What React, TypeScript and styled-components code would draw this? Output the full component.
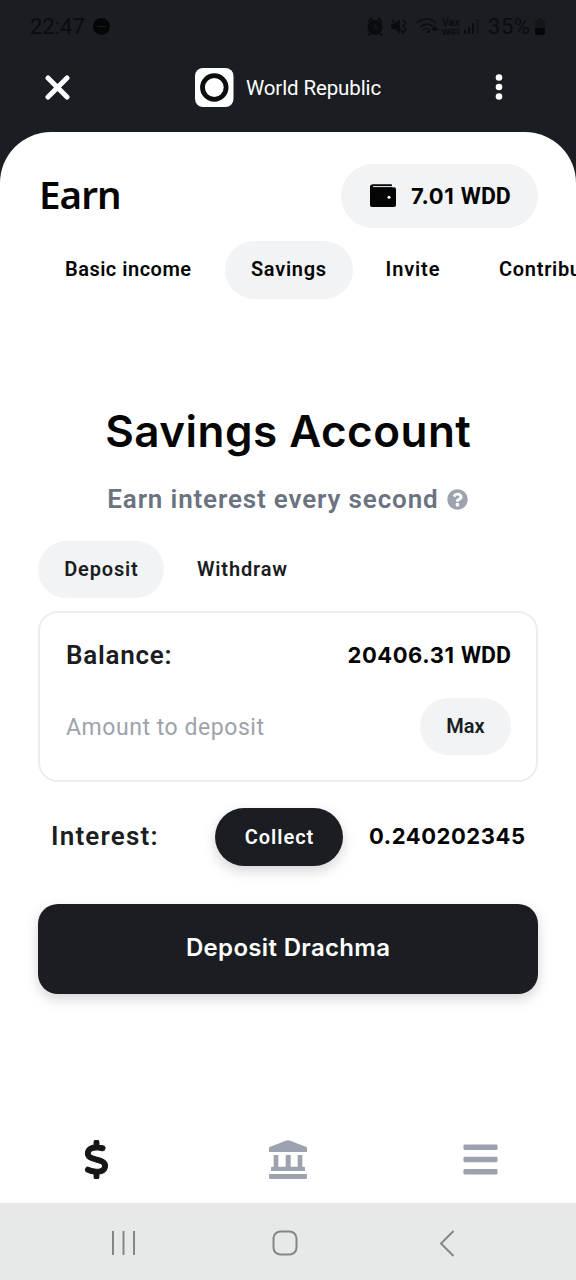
import React from 'react';
import styled, { createGlobalStyle } from 'styled-components';
import { FaBars, FaQuestionCircle } from 'react-icons/fa';
import { FaDollarSign } from 'react-icons/fa6';

const GlobalStyle = createGlobalStyle`
  *, *::before, *::after { box-sizing: border-box; }
  body { margin: 0; background: #1a1d21; font-family: Roboto, "Liberation Sans", sans-serif; }
  h1 { margin: 0; }
  button, input { font: inherit; border: 0; padding: 0; margin: 0; background: none; }
`;

const Screen = styled.div`
  width: 576px;
  height: 1280px;
  display: flex;
  flex-direction: column;
  overflow: hidden;
  background: #1a1d21;
`;

const StatusBar = styled.div`
  height: 54px;
  padding: 0 30px;
  display: flex;
  align-items: center;
  justify-content: space-between;
`;

const StatusGroup = styled.div<{ $gap: number }>`
  display: flex;
  align-items: center;
  gap: ${(p) => p.$gap}px;
`;

const AppBar = styled.header`
  height: 78px;
  padding: 0 66px 12px 45px;
  display: grid;
  grid-template-columns: 149.5px 1fr 15px;
  align-items: center;
  color: #fff;
`;

const Brand = styled.div`
  display: flex;
  align-items: center;
  gap: 12.5px;
`;

const BrandName = styled.span`
  padding-top: 2px;
  font-size: 20.5px;
  line-height: 1.2;
  letter-spacing: -0.12px;
`;

const Sheet = styled.main`
  height: 1071px;
  display: flex;
  flex-direction: column;
  border-radius: 51px 51px 0 0;
  background: #fff;
  overflow: hidden;
`;

const TitleRow = styled.div`
  display: flex;
  align-items: center;
  justify-content: space-between;
  padding: 32px 38px 0 39px;
`;

const Title = styled.h1`
  padding-bottom: 4px;
  font-family: "Noto Sans", sans-serif;
  font-size: 38.5px;
  font-weight: 600;
  line-height: 1.2;
  letter-spacing: -0.9px;
  color: #050505;
`;

const WalletPill = styled.div`
  width: 197px;
  height: 64px;
  border-radius: 32px;
  display: flex;
  align-items: center;
  gap: 15px;
  padding-left: 29px;
  background: #f2f3f5;
`;

const Tabs = styled.nav<{ $top: number; $gap?: number }>`
  display: flex;
  flex: none;
  gap: ${(p) => p.$gap ?? 0}px;
  margin: ${(p) => p.$top}px 0 0 38px;
`;

const Pill = styled.button<{ $active?: boolean; $width: number; $height?: number }>`
  flex: none;
  width: ${(p) => p.$width}px;
  height: ${(p) => p.$height ?? 57}px;
  border-radius: 29px;
  display: flex;
  align-items: center;
  justify-content: center;
  background: ${(p) => (p.$active ? '#f2f3f5' : 'transparent')};
`;

const TabPill = styled(Pill)`
  padding-bottom: 2px;
`;

const Text = styled.span<{
  $size: number;
  $weight?: number;
  $spacing?: number;
  $color?: string;
  $family?: string;
}>`
  font-family: ${(p) => p.$family ?? 'Roboto'}, "Liberation Sans", sans-serif;
  font-size: ${(p) => p.$size}px;
  font-weight: ${(p) => p.$weight ?? 600};
  letter-spacing: ${(p) => p.$spacing ?? 0}px;
  margin-right: ${(p) => -(p.$spacing ?? 0)}px;
  color: ${(p) => p.$color ?? '#050505'};
  line-height: 1.2;
  white-space: pre;
`;

const Money = styled.div`
  display: flex;
  align-items: baseline;
  gap: 6.5px;
  font-family: Inter, "Liberation Sans", sans-serif;
  font-size: 22px;
  font-weight: 700;
  line-height: 28px;
  letter-spacing: 0.55px;
  color: #050505;
`;

const Unit = styled.span`
  font-family: Roboto, "Liberation Sans", sans-serif;
  font-size: 23px;
  letter-spacing: 0;
`;

const Hero = styled.section`
  display: flex;
  flex-direction: column;
  align-items: center;
  padding-top: 106px;
`;

const Subtitle = styled.div`
  display: flex;
  align-items: center;
  gap: 9px;
  margin-top: 27px;
  height: 30px;
  padding-right: 1px;
`;

const Card = styled.section`
  flex: none;
  height: 171px;
  margin: 13px 38px 0;
  padding: 14px 25px 0 26px;
  border: 2px solid #ededee;
  border-radius: 20px;
`;

const CardRow = styled.div<{ $height: number }>`
  height: ${(p) => p.$height}px;
  display: flex;
  align-items: center;
  justify-content: space-between;
`;

const AmountInput = styled.input`
  width: 260px;
  height: 40px;
  padding-top: 2px;
  outline: none;
  font-size: 23px;
  letter-spacing: 0.55px;
  &::placeholder { color: #9ca3ab; opacity: 1; }
`;

const InterestRow = styled.div`
  display: grid;
  grid-template-columns: 164px 128px 1fr;
  align-items: center;
  margin: 26px 38px 0 51px;
`;

const CollectButton = styled.button`
  height: 58px;
  border-radius: 29px;
  background: #1a1d21;
  box-shadow: 0 5px 13px rgba(0, 0, 0, 0.17);
`;

const Amount = styled.div`
  padding: 0 0 2px 26px;
`;

const DepositButton = styled.button`
  flex: none;
  height: 90px;
  margin: 38px 38px 0;
  border-radius: 20px;
  background: #1a1d21;
  box-shadow: 0 5px 13px rgba(0, 0, 0, 0.17);
`;

const BottomNav = styled.nav`
  height: 88px;
  margin-top: auto;
  display: grid;
  grid-template-columns: repeat(3, 1fr);
  justify-items: center;
  align-items: center;
  color: #9ca3af;
`;

const SystemNav = styled.nav`
  height: 77px;
  flex: none;
  padding: 3px 121px 0 111px;
  display: grid;
  grid-template-columns: 161px 1fr 16px;
  align-items: center;
  background: #e7e9e8;
`;

const INK = '#0a0c0f';

const StatusIcons = () => (
  <svg width="114" height="22" viewBox="0 0 114 22" fill="none" stroke={INK} strokeWidth="2">
    <circle cx="8" cy="11.5" r="6.5" fill={INK} />
    <path d="M1 6l4-4M15 6l-4-4M3 18l-2 1M13 18l2 1" />
    <path d="M8 8v4h3" stroke="#1a1d21" strokeWidth="1.2" />
    <path d="M24 8h4l5-5v15l-5-5h-4z" fill={INK} stroke="none" />
    <path d="M25 4l12 14M36 4l3 3-3 3 3 3-3 4" strokeWidth="1.5" />
    <path d="M50 7q10-8 19 0M53 11q7-6 13 0M56 14q4-3 7 0" strokeWidth="1.2" />
    <path d="M60 16h3M68 10v5M65 13h6" strokeWidth="2" />
    <path d="M98 18v-4M102 18V11M106 18V7" strokeWidth="1.8" />
    <path d="M110.5 18V3" strokeWidth="1.8" opacity="0.5" />
    <g fill={INK} stroke="none" fontFamily="Liberation Sans, sans-serif" fontWeight="700">
      <text x="75" y="10" fontSize="10" textLength="18">Vax</text>
      <text x="75" y="19" fontSize="9" textLength="18" lengthAdjust="spacingAndGlyphs">WiFi</text>
    </g>
  </svg>
);

const BatteryIcon = () => (
  <svg width="12" height="18" viewBox="0 0 12 18">
    <path d="M4 0h4v2h3v8H1V2h3z" fill="#14171a" />
    <path d="M1 10h10v5a2 2 0 0 1-2 2H3a2 2 0 0 1-2-2z" fill="#050608" />
  </svg>
);

const WalletIcon = () => (
  <svg width="26" height="24" viewBox="0 0 26 24">
    <path d="M0 3Q0 .3 3 .3h18q1 0 1 1v2h2a2 2 0 0 1 2 2V21a2 2 0 0 1-2 2H2a2 2 0 0 1-2-2z" fill="#050505" />
    <path d="M3 2.6H24" stroke="#f2f3f5" strokeWidth="1" />
    <circle cx="19" cy="13.2" r="1.5" fill="#fff" />
  </svg>
);

const BankIcon = () => (
  <svg width="38" height="39" viewBox="0 0 114 117" fill="#9ca3af">
    <path d="M2 21L54 1q3-1 6 0l52 20q2 1 2 3v12H0V24q0-2 2-3z" />
    <path d="M14 45h14v35h22V45h15v35h21V45h14v35h5q3 0 3 3v10H6V83q0-3 3-3h5z" />
    <rect y="102" width="114" height="15" rx="3" />
  </svg>
);

export default function App() {
  return (
    <Screen>
      <GlobalStyle />
      <StatusBar>
        <StatusGroup $gap={8.5}>
          <Text $size={22} $weight={400} $color={INK}>22:47</Text>
          <svg width="17" height="17" viewBox="0 0 17 17">
            <circle cx="8.5" cy="8.5" r="8.5" fill="#050608" />
            <path d="M4 8.5h9" stroke="#1a1d21" strokeWidth="1.2" />
          </svg>
        </StatusGroup>
        <StatusGroup $gap={4}>
          <StatusGroup $gap={6.5}>
            <StatusIcons />
            <Text $size={22} $weight={400} $spacing={0.6} $color={INK}>35%</Text>
          </StatusGroup>
          <BatteryIcon />
        </StatusGroup>
      </StatusBar>
      <AppBar>
        <svg width="25" height="25" viewBox="0 0 25 25" stroke="#fff" strokeWidth="5" strokeLinecap="round">
          <path d="M3 3l19 19M22 3L3 22" />
        </svg>
        <Brand>
          <svg width="39" height="39" viewBox="0 0 39 39">
            <rect width="38.5" height="39" rx="8" fill="#fff" />
            <circle cx="19.3" cy="19.5" r="11.8" fill="none" stroke="#0b0d0e" strokeWidth="4.8" />
          </svg>
          <BrandName>World Republic</BrandName>
        </Brand>
        <svg width="8" height="26" viewBox="0 0 8 26" fill="#fff">
          <circle cx="4" cy="3.5" r="3.3" /><circle cx="4" cy="13" r="3.3" /><circle cx="4" cy="22.5" r="3.3" />
        </svg>
      </AppBar>
      <Sheet>
        <TitleRow>
          <Title>Earn</Title>
          <WalletPill>
            <WalletIcon />
            <Money>7.01<Unit>WDD</Unit></Money>
          </WalletPill>
        </TitleRow>
        <Tabs $top={13} $gap={6.5}>
          <TabPill $width={180} $height={58}><Text $size={20} $spacing={0.5}>Basic income</Text></TabPill>
          <TabPill $width={128} $height={58} $active><Text $size={20} $spacing={0.72}>Savings</Text></TabPill>
          <TabPill $width={107} $height={58}><Text $size={20} $spacing={0.85}>Invite</Text></TabPill>
          <TabPill $width={154} $height={58}><Text $size={20} $spacing={0.7}>Contribute</Text></TabPill>
        </Tabs>
        <Hero>
          <Text $size={44} $weight={600} $spacing={0.48} $family="Inter">Savings Account</Text>
          <Subtitle>
            <Text $size={26} $spacing={0.85} $color="#6b7280">Earn interest every second</Text>
            <FaQuestionCircle size={21} color="#9ca3af" />
          </Subtitle>
        </Hero>
        <Tabs $top={26}>
          <Pill $width={126} $active><Text $size={20} $spacing={0.85} $color="#1a1d21">Deposit</Text></Pill>
          <Pill $width={156}><Text $size={20} $spacing={0.85} $color="#1a1d21">Withdraw</Text></Pill>
        </Tabs>
        <Card>
          <CardRow $height={57}>
            <Text $size={26} $spacing={0.75} $color="#1a1d21">Balance:</Text>
            <Money>20406.31<Unit>WDD</Unit></Money>
          </CardRow>
          <CardRow $height={85}>
            <AmountInput placeholder="Amount to deposit" />
            <Pill $width={91} $active><Text $size={20} $color="#1a1d21">Max</Text></Pill>
          </CardRow>
        </Card>
        <InterestRow>
          <Text $size={26} $spacing={1.2} $color="#1a1d21">Interest:</Text>
          <CollectButton><Text $size={20} $spacing={1} $color="#fff">Collect</Text></CollectButton>
          <Amount><Money>0.240202345</Money></Amount>
        </InterestRow>
        <DepositButton><Text $size={24} $spacing={0.33} $color="#fff" $family="Inter">Deposit Drachma</Text></DepositButton>
        <BottomNav>
          <FaDollarSign size={39} color="#161616" stroke="#161616" strokeWidth={14} />
          <BankIcon />
          <FaBars size={39} />
        </BottomNav>
      </Sheet>
      <SystemNav>
        <svg width="25" height="26" viewBox="0 0 25 26" stroke="#858585" strokeWidth="2">
          <path d="M2 1v24M12.5 1v24M23 1v24" />
        </svg>
        <svg width="26" height="26" viewBox="0 0 26 26" fill="none" stroke="#858585" strokeWidth="2">
          <rect x="1.5" y="1.5" width="23" height="23" rx="7" />
        </svg>
        <svg width="16" height="27" viewBox="0 0 16 27" fill="none" stroke="#858585" strokeWidth="2">
          <path d="M14.5 1L2 13.5L14.5 26" />
        </svg>
      </SystemNav>
    </Screen>
  );
}
